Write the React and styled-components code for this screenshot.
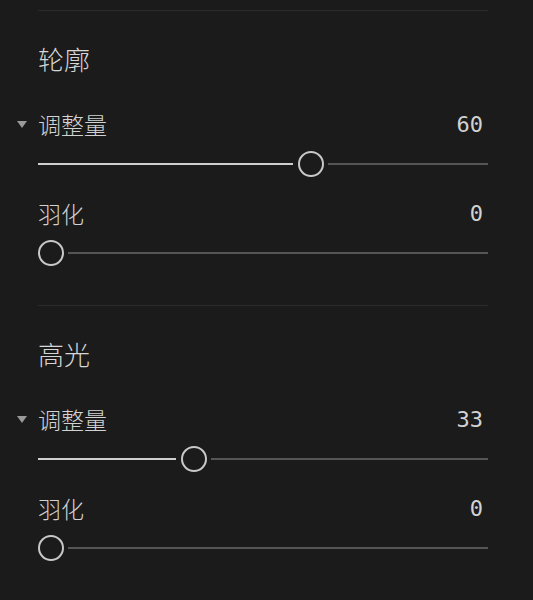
import React from "react";
import { createGlobalStyle, styled } from "styled-components";

const sections = [
  {
    title: "轮廓",
    controls: [
      { label: "调整量", value: 60, caret: true },
      { label: "羽化", value: 0 },
    ],
  },
  {
    title: "高光",
    controls: [
      { label: "调整量", value: 33, caret: true },
      { label: "羽化", value: 0 },
    ],
  },
];

const THUMB = 26;
const RANGE = 434;

const Slider = ({ value }) => {
  const left = (value / 100) * RANGE;
  return (
    <Track>
      {value > 0 && <Fill style={{ width: `${left - 5}px` }} />}
      <Thumb />
      <Rest />
    </Track>
  );
};

const Control = ({ label, value, caret }) => (
  <ControlBlock>
    <LabelRow>
      <Caret $visible={caret} />
      <Label>{label}</Label>
      <Value>{value}</Value>
    </LabelRow>
    <Slider value={value} />
  </ControlBlock>
);

export default function App() {
  return (
    <>
      <GlobalStyle />
      <Panel>
        {sections.map((s) => (
          <Section key={s.title}>
            <Divider />
            <Title>{s.title}</Title>
            {s.controls.map((c, i) => (
              <Control key={i} {...c} />
            ))}
          </Section>
        ))}
      </Panel>
    </>
  );
}

const GlobalStyle = createGlobalStyle`
  html, body {
    margin: 0;
    background: #1b1b1b;
  }
  body {
    font-family: "Noto Sans CJK SC", "Noto Sans", sans-serif;
    color: #d4d4d4;
  }
`;

const Panel = styled.div`
  width: 533px;
  height: 600px;
  box-sizing: border-box;
  padding: 10px 45px 0 38px;
  background: #1b1b1b;
  overflow: hidden;
`;

const Section = styled.div`
  padding-bottom: 39px;
`;

const Divider = styled.div`
  height: 1px;
  background: #2b2b2b;
`;

const Title = styled.div`
  margin: 24px 0 21px;
  height: 48px;
  line-height: 48px;
  font-size: 26px;
  font-weight: 300;
  color: #d6d6d6;
`;

const ControlBlock = styled.div`
  & + & {
    margin-top: 16px;
  }
`;

const LabelRow = styled.div`
  display: flex;
  align-items: center;
  height: 40px;
`;

const Caret = styled.span`
  width: 0;
  height: 0;
  margin-left: -21px;
  margin-right: 11px;
  border-left: 5px solid transparent;
  border-right: 5px solid transparent;
  border-top: 7px solid #9a9a9a;
  visibility: ${({ $visible }) => ($visible ? "visible" : "hidden")};
`;

const Label = styled.span`
  flex: 1;
  font-size: 23px;
  font-weight: 300;
  line-height: 40px;
  color: #d2d2d2;
`;

const Value = styled.span`
  padding-right: 5px;
  font-family: "DejaVu Sans Mono", "Liberation Mono", monospace;
  font-size: 22px;
  color: #d2d2d2;
`;

const Track = styled.div`
  margin-top: 7px;
  height: ${THUMB}px;
  display: flex;
  align-items: center;
  gap: 4px;
`;

const Fill = styled.div`
  height: 2px;
  margin-right: 1px;
  background: #cfcfcf;
`;

const Thumb = styled.div`
  flex: none;
  width: ${THUMB}px;
  height: ${THUMB}px;
  box-sizing: border-box;
  border: 2px solid #c8c8c8;
  border-radius: 50%;
  background: #1b1b1b;
`;

const Rest = styled.div`
  flex: 1;
  height: 2px;
  background: #555555;
`;
